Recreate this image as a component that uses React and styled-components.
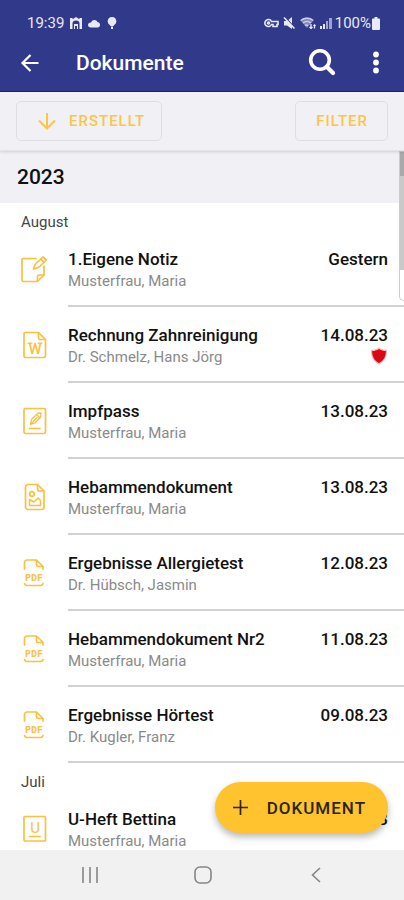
import styled, { createGlobalStyle } from 'styled-components';

const GlobalStyle = createGlobalStyle`
  * {
    box-sizing: border-box;
  }

  body {
    margin: 0;
    background: #fff;
    font-family: Roboto, sans-serif;
  }

  button {
    font-family: inherit;
    cursor: pointer;
  }
`;

const Screen = styled.div`
  position: relative;
  display: flex;
  flex-direction: column;
  height: 100vh;
  overflow: hidden;
`;

const Header = styled.header`
  flex: none;
  background: #313a8a;
  color: #fff;
  border-bottom: 1px solid #1b2378;
`;

const StatusBar = styled.div`
  display: flex;
  align-items: center;
  justify-content: space-between;
  height: 34px;
  padding: 12px 24px 0 27px;
  font-size: 15px;
  line-height: 20px;
  color: #e8e9f6;
`;

const StatusGroup = styled.div`
  display: flex;
  align-items: center;
  gap: ${({ $gap }) => $gap}px;
`;

const AppBar = styled.div`
  display: flex;
  align-items: center;
  height: 57px;
  padding: 0 8px 0 16px;
`;

const AppActions = styled.div`
  display: flex;
  gap: 14px;
`;

const IconButton = styled.button`
  display: flex;
  align-items: center;
  justify-content: center;
  width: ${({ $width }) => $width}px;
  height: 40px;
  padding: 0;
  border: 0;
  background: none;
  color: ${({ $color }) => $color || '#fff'};
`;

const Title = styled.h1`
  flex: 1;
  margin: 0 0 0 32px;
  font-size: 21px;
  line-height: 28px;
  font-weight: 500;
`;

const FilterBar = styled.div`
  z-index: 1;
  flex: none;
  display: flex;
  align-items: center;
  justify-content: space-between;
  height: 59px;
  padding: 0 16px;
  background: #f1f0f5;
  border-bottom: 1px solid #e3e3e8;
  box-shadow: 0 1px 3px rgba(0, 0, 0, 0.14);
`;

const OutlineButton = styled.button`
  display: flex;
  align-items: center;
  gap: 12px;
  height: 40px;
  padding: 0 ${({ $icon }) => ($icon ? 16 : 19)}px 0 20px;
  border: 1px solid #dedee3;
  border-radius: 5px;
  background: transparent;
  color: #fcc645;
  font-size: 15px;
  font-weight: 500;
  letter-spacing: 1px;
  text-transform: uppercase;
`;

const Content = styled.main`
  position: relative;
  flex: 1;
  min-height: 0;
  overflow: hidden;
`;

const Year = styled.h2`
  margin: 0;
  padding: 12px 17px;
  background: #f1f0f5;
  color: #111;
  font-size: 21px;
  line-height: 28px;
  font-weight: 500;
`;

const Month = styled.h3`
  margin: 0;
  padding: 10px 21px 0;
  color: #444;
  font-size: 15px;
  line-height: 18px;
  font-weight: 400;
`;

const List = styled.ul`
  margin: 0;
  padding: 0;
  list-style: none;
`;

const Row = styled.li`
  display: flex;
  height: 76px;
`;

const RowIcon = styled.div`
  flex: none;
  display: flex;
  align-items: center;
  width: 68px;
  padding-left: 20px;

  svg {
    display: block;
  }
`;

const RowBody = styled.div`
  flex: 1;
  display: flex;
  justify-content: space-between;
  padding: 17px 16px 0 0;
  border-bottom: 2px solid #d2d2d2;
`;

const DocName = styled.div`
  color: #111;
  font-size: 17px;
  line-height: 22px;
  font-weight: 500;
`;

const Person = styled.div`
  color: #8a8a8a;
  font-size: 15px;
  line-height: 22px;
`;

const DateColumn = styled.div`
  display: flex;
  flex-direction: column;
  align-items: flex-end;
  color: #111;
  font-size: 17px;
  line-height: 22px;
  font-weight: 500;
`;

const ScrollTrack = styled.div`
  position: absolute;
  top: 0;
  right: 0;
  width: 5px;
  height: 150px;
  border: 1px solid #ccc;
  border-right: 0;
  border-radius: 0 0 0 5px;
  background: #fff;
`;

const ScrollThumb = styled.div`
  height: 118px;
  background: linear-gradient(#a9a9ab 24px, #c9c9c9 24px);
`;

const Fab = styled.button`
  position: absolute;
  right: 16px;
  bottom: 67px;
  display: flex;
  align-items: center;
  gap: 18px;
  height: 51px;
  padding: 0 22px 0 17px;
  border: 0;
  border-radius: 26px;
  background: #fec32f;
  color: #2b2410;
  box-shadow: 0 4px 7px rgba(0, 0, 0, 0.28);
  font-size: 17px;
  font-weight: 500;
  letter-spacing: 1px;
  text-transform: uppercase;
`;

const NavBar = styled.nav`
  z-index: 1;
  flex: none;
  display: flex;
  align-items: center;
  justify-content: space-between;
  height: 50px;
  padding: 0 68px 0 70px;
  background: #f1f1f1;
`;

const ICON_COLOR = '#fbc040';

const DocSvg = ({ children }) => (
  <svg width="30" height="30" viewBox="0 0 30 30" fill="none" stroke={ICON_COLOR} strokeWidth="1.7" strokeLinejoin="round" strokeLinecap="round" aria-hidden="true">
    {children}
  </svg>
);

const NoteIcon = () => (
  <DocSvg>
    <path d="M16 4.500H3.500a1.500 1.500 0 0 0-1.500 1.500V26a1.500 1.500 0 0 0 1.500 1.500H17.500L24 21V12" />
    <path d="M17.500 27V22.500a1.500 1.500 0 0 1 1.500-1.500H24" />
    <path d="M13.500 15l1.500-4.500 8-7.500 3.500 3-8 7.500zM20.500 5l3.500 3.500" />
  </DocSvg>
);

const WordIcon = () => (
  <DocSvg>
    <path d="M6 2.500H18.500L25.500 9.500V26a1.500 1.500 0 0 1-1.500 1.500H5.500A1.500 1.500 0 0 1 4 26V4a1.500 1.500 0 0 1 1.500-1.500z" />
    <path d="M18.500 3V8a1.500 1.500 0 0 0 1.500 1.500H25" />
    <text x="15" y="23.500" textAnchor="middle" fontFamily="Roboto, sans-serif" fontSize="15" fontWeight="500" fill={ICON_COLOR} stroke="none">W</text>
    <path d="M8 13.200h4M18 13.200h4" strokeWidth="1.200" />
  </DocSvg>
);

const PassIcon = () => (
  <DocSvg>
    <rect x="4" y="2.500" width="21.500" height="25" rx="1.500" />
    <path d="M9.500 22.500H20" />
    <path strokeWidth="1.300" d="M10.500 18.500l1-5 6-6 3.500-.5-.5 4-5.500 6zM10.500 18.500l6.500-7M16.500 8.500l3.500 3.500" />
  </DocSvg>
);

const ImageIcon = () => (
  <DocSvg>
    <path d="M8 2.500H17.500L24 9V25a2.500 2.500 0 0 1-2.500 2.500H8A2.500 2.500 0 0 1 5.500 25V5A2.500 2.500 0 0 1 8 2.500z" />
    <path d="M17.500 3V7a2 2 0 0 0 2 2H24" />
    <circle cx="12" cy="12" r="2.300" />
    <path d="M9.500 17.500V23.500H20.500V18.500L18 16l-4 4z" strokeWidth="1.500" />
  </DocSvg>
);

const PdfIcon = () => (
  <DocSvg>
    <path d="M4.500 11V4.500A2.500 2.500 0 0 1 7 2H16.500L23 8.500V11" />
    <path d="M16.500 2.500V7a1.500 1.500 0 0 0 1.500 1.500H22.500" />
    <path d="M4.500 25.500q.500 2 2.500 2H20.500q2 0 2.500-2" />
    <text x="14" y="22.500" textAnchor="middle" fontFamily="Liberation Mono, monospace" fontSize="10" fontWeight="700" fill={ICON_COLOR} stroke="none">PDF</text>
  </DocSvg>
);

const UBookletIcon = () => (
  <DocSvg>
    <rect x="4" y="2.500" width="21.500" height="24.500" rx="1" />
    <text x="15" y="19" textAnchor="middle" fontFamily="Roboto, sans-serif" fontSize="15" fill={ICON_COLOR} stroke="none">U</text>
    <path d="M9.500 22.500H20" />
  </DocSvg>
);

const ShieldIcon = () => (
  <svg width="18" height="20" viewBox="0 0 18 20" role="img" aria-label="Geschützt">
    <path d="M9 1.500c2.300 1.500 5 2.300 8 2.300.5 6.500-2 11.500-8 14.700C3 15.300.5 10.300 1 3.800c3 0 5.700-.8 8-2.300z" fill="#f3b9b9" />
    <path d="M9 3c2.200 1.400 4.500 2 6.800 2 .2 5.200-1.800 9.300-6.800 12C4 14.300 2 10.200 2.200 5 4.500 5 6.800 4.400 9 3z" fill="#dc0714" />
  </svg>
);

const icons = {
  note: NoteIcon,
  word: WordIcon,
  pass: PassIcon,
  image: ImageIcon,
  pdf: PdfIcon,
  booklet: UBookletIcon,
};

const months = [
  {
    name: 'August',
    documents: [
      { icon: 'note', name: '1.Eigene Notiz', person: 'Musterfrau, Maria', date: 'Gestern' },
      { icon: 'word', name: 'Rechnung Zahnreinigung', person: 'Dr. Schmelz, Hans Jörg', date: '14.08.23', shield: true },
      { icon: 'pass', name: 'Impfpass', person: 'Musterfrau, Maria', date: '13.08.23' },
      { icon: 'image', name: 'Hebammendokument', person: 'Musterfrau, Maria', date: '13.08.23' },
      { icon: 'pdf', name: 'Ergebnisse Allergietest', person: 'Dr. Hübsch, Jasmin', date: '12.08.23' },
      { icon: 'pdf', name: 'Hebammendokument Nr2', person: 'Musterfrau, Maria', date: '11.08.23' },
      { icon: 'pdf', name: 'Ergebnisse Hörtest', person: 'Dr. Kugler, Franz', date: '09.08.23' },
    ],
  },
  {
    name: 'Juli',
    documents: [
      { icon: 'booklet', name: 'U-Heft Bettina', person: 'Musterfrau, Maria', date: '26.07.23' },
    ],
  },
];

const DocumentRow = ({ doc }) => {
  const Icon = icons[doc.icon];

  return (
    <Row>
      <RowIcon>
        <Icon />
      </RowIcon>
      <RowBody>
        <div>
          <DocName>{doc.name}</DocName>
          <Person>{doc.person}</Person>
        </div>
        <DateColumn>
          {doc.date}
          {doc.shield && <ShieldIcon />}
        </DateColumn>
      </RowBody>
    </Row>
  );
};

const App = () => (
  <Screen>
    <GlobalStyle />
    <Header>
      <StatusBar>
        <StatusGroup $gap={6}>
          <span>19:39</span>
          <svg width="12" height="12" viewBox="0 0 12 12" fill="currentColor" aria-hidden="true">
            <path d="M0 1h2l1 1 3-2 3 2 1-1h2v11H9.500V6.500a3.500 3 0 0 0-7 0V12H0z" />
            <path d="M4 7h4v5H7V9H5v3H4z" />
          </svg>
          <svg width="13" height="10" viewBox="0 0 13 10" fill="currentColor" aria-hidden="true">
            <path d="M3 9.500a3 2.500 0 0 1 0-5 3.500 3.500 0 0 1 6.500-.5 2.800 2.800 0 0 1 .5 5.500z" />
          </svg>
          <svg width="10" height="12" viewBox="0 0 10 12" fill="currentColor" aria-hidden="true">
            <path d="M5 0a4.300 4.300 0 0 1 2.200 8L6.500 9h-3l-.7-1A4.300 4.300 0 0 1 5 0zM4 9.500h2V12H4z" />
          </svg>
        </StatusGroup>
        <StatusGroup $gap={4}>
          <svg width="15" height="10" viewBox="0 0 15 10" fill="none" stroke="currentColor" strokeWidth="1.600" aria-hidden="true">
            <path d="M7.500 3.500A3.500 3.500 0 1 0 7.500 6.500H9V8.500h4V6.500h1V3.500z" />
            <circle cx="4.500" cy="5" r="1" />
          </svg>
          <svg width="13" height="12" viewBox="0 0 13 12" aria-hidden="true">
            <path d="M1 4h3l5-4v12L4 8.500H1z" fill="currentColor" />
            <path d="M2 0l10 11" stroke="#313a8a" strokeWidth="1.200" />
            <path d="M1 .5l10.500 11" stroke="currentColor" strokeWidth="1.500" />
          </svg>
          <svg width="16" height="12" viewBox="0 0 16 12" aria-hidden="true">
            <path d="M0 3a10 10 0 0 1 14 0L9 8.500 7 11z" fill="currentColor" opacity=".45" />
            <path d="M1 3.500a9 9 0 0 1 12 0M3 6a6 6 0 0 1 8 0M5 8.500a3 3 0 0 1 3 0" fill="none" stroke="currentColor" strokeWidth="1.500" opacity=".7" />
            <path d="M11 7v4.500M9.500 10l1.500 1.500 1.500-1.500M14.500 11.500V8M13.500 9l1-1 1 1" fill="none" stroke="currentColor" strokeWidth="1.300" />
          </svg>
          <StatusGroup $gap={3}>
            <svg width="12" height="12" viewBox="0 0 12 12" fill="currentColor" aria-hidden="true">
              <path d="M0 9h2v3H0zM3 7h2v5H3z" />
              <path d="M6 4h2v8H6zM9 1h3v11H9z" opacity=".6" />
            </svg>
            <StatusGroup $gap={1}>
              <span>100%</span>
              <svg width="8" height="13" viewBox="0 0 8 13" fill="currentColor" aria-hidden="true">
                <path d="M2.500 0h3v1.500H7a1 1 0 0 1 1 1V12a1 1 0 0 1-1 1H1a1 1 0 0 1-1-1V2.500a1 1 0 0 1 1-1h1.500z" />
              </svg>
            </StatusGroup>
          </StatusGroup>
        </StatusGroup>
      </StatusBar>
      <AppBar>
        <IconButton $width={28} aria-label="Zurück">
          <svg width="20" height="20" viewBox="0 0 20 20" fill="none" stroke="currentColor" strokeWidth="2.200" aria-hidden="true">
            <path d="M18.500 10H3M10.500 2L2.500 10l8 8" />
          </svg>
        </IconButton>
        <Title>Dokumente</Title>
        <AppActions>
          <IconButton $width={40} aria-label="Suchen">
            <svg width="28" height="28" viewBox="0 0 28 28" fill="none" stroke="currentColor" strokeLinecap="round" aria-hidden="true">
              <circle cx="12" cy="11" r="9.300" strokeWidth="3.600" />
              <path d="M19 18l6 6" strokeWidth="4.200" />
            </svg>
          </IconButton>
          <IconButton $width={40} aria-label="Mehr">
            <svg width="8" height="24" viewBox="0 0 8 24" fill="currentColor" aria-hidden="true">
              <circle cx="4" cy="3.500" r="2.900" />
              <circle cx="4" cy="11.500" r="2.900" />
              <circle cx="4" cy="19.500" r="2.900" />
            </svg>
          </IconButton>
        </AppActions>
      </AppBar>
    </Header>

    <FilterBar>
      <OutlineButton $icon>
        <svg width="20" height="18" viewBox="0 0 20 18" fill="none" stroke="currentColor" strokeWidth="2" aria-hidden="true">
          <path d="M10 1v15M2 8.500l8 8 8-8" />
        </svg>
        Erstellt
      </OutlineButton>
      <OutlineButton>Filter</OutlineButton>
    </FilterBar>

    <Content>
      <Year>2023</Year>
      {months.map((month) => (
        <section key={month.name}>
          <Month>{month.name}</Month>
          <List>
            {month.documents.map((doc) => (
              <DocumentRow key={doc.name} doc={doc} />
            ))}
          </List>
        </section>
      ))}
      <ScrollTrack>
        <ScrollThumb />
      </ScrollTrack>
    </Content>

    <Fab>
      <svg width="17" height="17" viewBox="0 0 17 17" stroke="currentColor" strokeWidth="1.700" aria-hidden="true">
        <path d="M8.500 1v15M1 8.500h15" />
      </svg>
      Dokument
    </Fab>

    <NavBar>
      <IconButton $width={40} $color="#858585" aria-label="Letzte Apps">
        <svg width="16" height="16" viewBox="0 0 16 16" stroke="currentColor" strokeWidth="1.600" aria-hidden="true">
          <path d="M1 0v16M8 0v16M15 0v16" />
        </svg>
      </IconButton>
      <IconButton $width={40} $color="#858585" aria-label="Startseite">
        <svg width="18" height="18" viewBox="0 0 18 18" fill="none" stroke="currentColor" strokeWidth="1.600" aria-hidden="true">
          <rect x="1" y="1" width="16" height="16" rx="5" />
        </svg>
      </IconButton>
      <IconButton $width={40} $color="#858585" aria-label="Zurück">
        <svg width="10" height="16" viewBox="0 0 10 16" fill="none" stroke="currentColor" strokeWidth="1.600" aria-hidden="true">
          <path d="M9 1L1.500 8 9 15" />
        </svg>
      </IconButton>
    </NavBar>
  </Screen>
);

export default App;
